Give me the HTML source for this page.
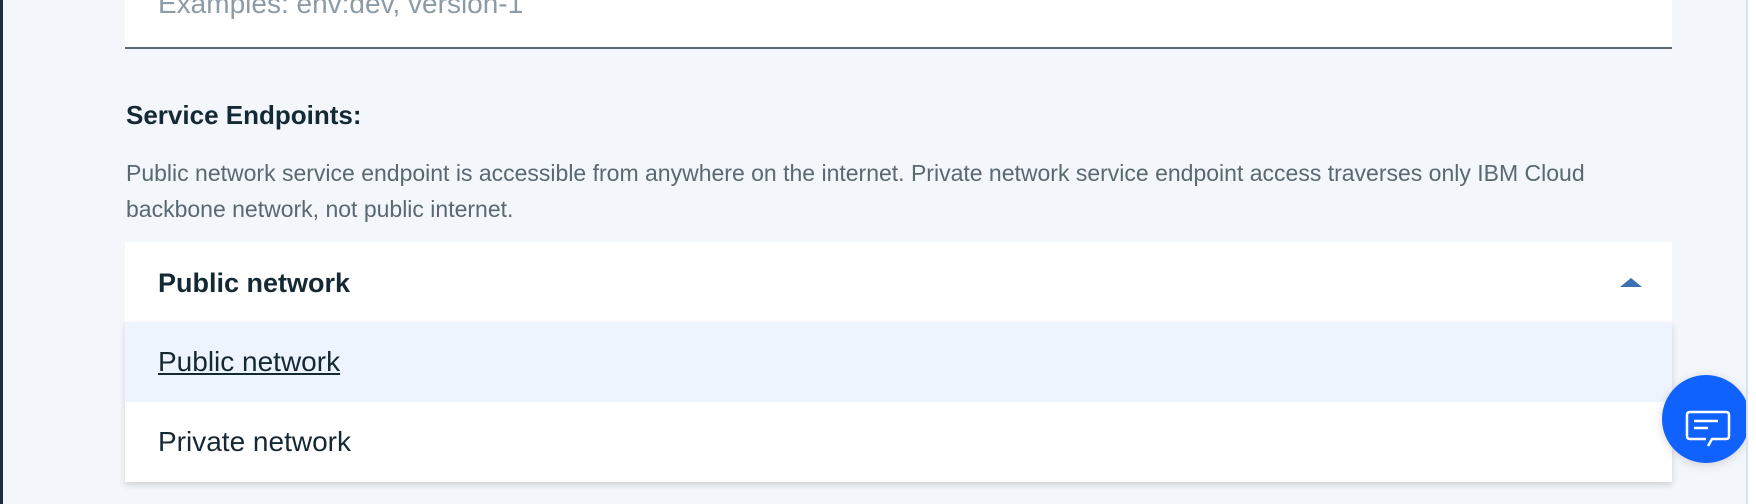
<!DOCTYPE html>
<html><head><meta charset="utf-8"><style>
*{margin:0;padding:0;box-sizing:border-box}
html,body{width:1756px;height:504px;overflow:hidden;background:#f3f6fb;font-family:"Liberation Sans",sans-serif}
.lb{position:absolute;left:0;top:0;width:3px;height:504px;background:#1f2d3d}
.rb{position:absolute;left:1746px;top:0;width:10px;height:504px;background:#fff;border-left:2px solid #dde1e6}
.input{position:absolute;left:125px;top:0;width:1547px;height:49px;background:#fff;border-bottom:2px solid #5a6872}
.input span{position:absolute;left:33px;top:-12px;font-size:28px;color:#8c9ba5;white-space:nowrap}
.h{position:absolute;left:126px;top:100px;font-size:26px;font-weight:bold;color:#152935;white-space:nowrap}
.d{position:absolute;left:126px;font-size:23px;color:#5a6872;white-space:nowrap}
.dd{position:absolute;left:125px;top:242px;width:1547px;height:80px;background:#fff}
.menu{position:absolute;left:125px;top:322px;width:1547px;height:160px;background:#fff;box-shadow:0 3px 6px rgba(0,0,0,.15)}
.row{position:absolute;left:0;width:100%;height:80px}
.t{position:absolute;left:33px;top:23px;font-size:28px;color:#152935;white-space:nowrap}
.tri{position:absolute;left:1620px;top:278px;width:0;height:0;border-left:11px solid transparent;border-right:11px solid transparent;border-bottom:9px solid #3d70b2}
.chat{position:absolute;left:1662px;top:375px;width:88px;height:88px;border-radius:50%;background:#0f62fe;box-shadow:0 2px 10px rgba(0,0,0,.15)}
</style></head><body>
<div class="lb"></div>
<div class="input"><span>Examples: env:dev, version-1</span></div>
<div class="h">Service Endpoints:</div>
<div class="d" style="top:160px">Public network service endpoint is accessible from anywhere on the internet. Private network service endpoint access traverses only IBM Cloud</div>
<div class="d" style="top:196px">backbone network, not public internet.</div>
<div class="dd"><div class="t" style="font-weight:bold;font-size:27px;top:26px">Public network</div></div>
<div class="tri"></div>
<div class="menu">
<div class="row" style="top:0;background:#edf4fe"><div class="t" style="text-decoration:underline;top:24px">Public network</div></div>
<div class="row" style="top:80px"><div class="t" style="top:24px">Private network</div></div>
</div>
<div class="chat"><svg width="88" height="88" viewBox="0 0 88 88"><path d="M28 37 h36 q3 0 3 3 v21 q0 3 -3 3 h-14 l-4 7 M44 64 h-16 q-3 0 -3 -3 v-21 q0 -3 3 -3" fill="none" stroke="#fff" stroke-width="2.5"/><path d="M32 46 h24 M32 53 h14" stroke="#fff" stroke-width="2.5"/></svg></div>
<div class="rb"></div>
</body></html>
